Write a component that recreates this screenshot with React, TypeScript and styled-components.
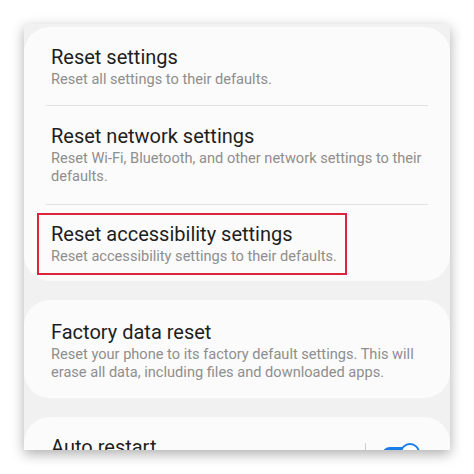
import React from "react";
import styled, { createGlobalStyle } from "styled-components";

const Global = createGlobalStyle`
  html, body { margin: 0; padding: 0; background: #ffffff; }
  body { font-family: Roboto, "Noto Sans", "Liberation Sans", sans-serif; }
`;

const Page = styled.div`
  width: 474px;
  height: 474px;
  padding: 24px;
  box-sizing: border-box;
  background: #ffffff;
`;

const Frame = styled.div`
  width: 426px;
  height: 426px;
  background: #f1f1f1;
  overflow: hidden;
  box-shadow: 0 4px 12px rgba(0, 0, 0, 0.32);
  display: flex;
  flex-direction: column;
  gap: 19px;
  padding-top: 3px;
  box-sizing: border-box;
`;

const Card = styled.div`
  background: #fbfbfb;
  border-radius: 26px;
  display: flex;
  flex-direction: column;
  flex-shrink: 0;
`;

const Row = styled.div<{ $pt?: number; $pb?: number; $pl?: number }>`
  padding: ${(p) => p.$pt ?? 17}px 24px ${(p) => p.$pb ?? 17}px ${(p) => p.$pl ?? 27}px;
  display: flex;
  align-items: flex-start;
`;

const Divider = styled.div`
  height: 1px;
  background: #e2e2e2;
  margin: 0 22px;
`;

const TextBlock = styled.div`
  flex: 1;
  display: flex;
  flex-direction: column;
`;

const Highlight = styled.div`
  padding: 6px 8px 8px 12px;
  border: 2px solid #dc2441;
  display: flex;
  flex-direction: column;
`;

const Title = styled.div`
  font-size: 20px;
  line-height: 26px;
  color: #1e1e1e;
`;

const Sub = styled.div`
  font-size: 14.6px;
  line-height: 18px;
  color: #8e8e8e;
`;

const SideDivider = styled.div`
  width: 1px;
  height: 26px;
  background: #cfcfcf;
  margin: 9px 16px 0 0;
`;

const Switch = styled.div`
  position: relative;
  width: 38px;
  height: 26px;
  margin: 9px 6px 0 0;
`;

const Track = styled.div`
  position: absolute;
  left: 0;
  top: 4px;
  width: 36px;
  height: 16px;
  border-radius: 8px;
  background: #1a7de8;
`;

const Thumb = styled.div`
  position: absolute;
  left: 18px;
  top: 0;
  width: 20px;
  height: 20px;
  border-radius: 50%;
  background: #ffffff;
  border: 2px solid #1a7de8;
  box-sizing: border-box;
`;

export default function App() {
  return (
    <>
      <Global />
      <Page>
        <Frame>
          <Card>
            <Row>
              <TextBlock>
                <Title>Reset settings</Title>
                <Sub>Reset all settings to their defaults.</Sub>
              </TextBlock>
            </Row>
            <Divider />
            <Row $pb={19}>
              <TextBlock>
                <Title>Reset network settings</Title>
                <Sub>Reset Wi-Fi, Bluetooth, and other network settings to their defaults.</Sub>
              </TextBlock>
            </Row>
            <Divider />
            <Row $pt={8} $pb={6} $pl={13}>
              <Highlight>
                <Title>Reset accessibility settings</Title>
                <Sub>Reset accessibility settings to their defaults.</Sub>
              </Highlight>
            </Row>
          </Card>
          <Card>
            <Row $pt={19} $pb={17}>
              <TextBlock>
                <Title>Factory data reset</Title>
                <Sub>Reset your phone to its factory default settings. This will erase all data, including files and downloaded apps.</Sub>
              </TextBlock>
            </Row>
          </Card>
          <Card>
            <Row $pt={17}>
              <TextBlock>
                <Title>Auto restart</Title>
              </TextBlock>
              <SideDivider />
              <Switch>
                <Track />
                <Thumb />
              </Switch>
            </Row>
          </Card>
        </Frame>
      </Page>
    </>
  );
}
